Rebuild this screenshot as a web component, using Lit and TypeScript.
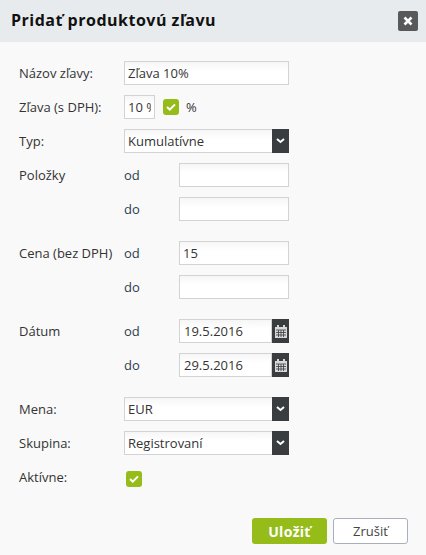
import { LitElement, html, css, svg } from "lit";
import { customElement } from "lit/decorators.js";

const chevron = svg`<svg width="9" height="6" viewBox="0 0 9 6"><path d="M1 1l3.500 3L8 1" fill="none" stroke="#fff" stroke-width="2"/></svg>`;
const check = svg`<svg width="10" height="8" viewBox="0 0 10 8"><path d="M1 4l2.800 2.600L9 1.400" fill="none" stroke="#fff" stroke-width="2"/></svg>`;
const cal = svg`<svg width="12" height="13" viewBox="0 0 12 13"><path d="M0 2h12v11H0z" fill="#d8d8d8"/><path d="M2 0h2v3H2zM8 0h2v3H8z" fill="#d8d8d8"/><path d="M1 5h10M1 7.500h10M1 10h10M3.500 5v7M6 5v7M8.500 5v7" stroke="#3a3d40" stroke-width=".8" fill="none"/></svg>`;

@customElement("app-root")
export class AppRoot extends LitElement {
  static styles = css`
    :host { display: block; width: 426px; height: 555px; background: #f9f9f9; font-family: "Open Sans", sans-serif; font-size: 13px; color: #333; overflow: hidden; }
    * { box-sizing: border-box; }
    .head { height: 42px; background: #e8ebee; display: flex; align-items: center; justify-content: space-between; padding: 0 8px 2px 11px; }
    h1 { margin: 0; font-size: 16px; font-weight: 700; color: #111; letter-spacing: .5px; }
    .close { width: 20px; height: 20px; border-radius: 2px; background: #58595b; display: flex; align-items: center; justify-content: center; margin-top: 2px; }
    form { display: flex; flex-direction: column; padding: 19px 0 0 19px; }
    .row { display: grid; grid-template-columns: 105px 55px 110px; align-items: center; height: 24px; margin-bottom: 10px; }
    .row.sp { margin-bottom: 20px; }
    .row > span.lab { line-height: 20px; }
    .sub { color: #2c3e50; }
    input, .sel { height: 24px; border: 1px solid #d3d3d3; background: linear-gradient(#f6f6f6, #fff 40%); font: inherit; font-size: 13px; color: #333; padding: 0 3px; outline: none; border-radius: 0; }
    input { width: 100%; }
    .wide { grid-column: 2 / 4; }
    .short { width: 31px; }
    .mid { grid-column: 2 / 4; display: flex; align-items: center; }
    .chk { width: 16px; height: 16px; border-radius: 3px; background: #95bc19; display: flex; align-items: center; justify-content: center; flex: none; }
    .mid .chk { margin: 0 7px 0 8px; }
    .mid .chk.act { margin: 4px 0 0 2px; }
    .sel { grid-column: 2 / 4; display: flex; align-items: center; justify-content: space-between; padding: 0 0 0 3px; }
    .arrow { width: 17px; height: 24px; margin-right: -1px; background: #3a3d40; display: flex; align-items: center; justify-content: center; }
    .date { position: relative; display: flex; }
    .date input { flex: 1; min-width: 0; padding-left: 4px; }
    .date .arrow { flex: none; margin: 0; }
    .foot { display: flex; gap: 6px; justify-content: flex-end; padding: 19px 18px 0 0; }
    button { width: 75px; height: 26px; border-radius: 3px; font: inherit; padding: 0; }
    .ok { background: #95bc19; border: 0; color: #fff; font-weight: 700; font-size: 14px; letter-spacing: .3px; }
    .no { background: #fff; border: 1px solid #aab0ba; color: #444; }
  `;

  private sub(lab: string, txt: string, val: string, sp = false) {
    return html`<div class="row ${sp ? "sp" : ""}"><span class="lab">${lab}</span><span class="sub">${txt}</span><input .value=${val} /></div>`;
  }
  private date(lab: string, txt: string, val: string, sp = false) {
    return html`<div class="row ${sp ? "sp" : ""}"><span class="lab">${lab}</span><span class="sub">${txt}</span><div class="date"><input .value=${val} /><span class="arrow">${cal}</span></div></div>`;
  }
  private sel(lab: string, val: string, sp = false) {
    return html`<div class="row ${sp ? "sp" : ""}"><span class="lab">${lab}</span><div class="sel"><span>${val}</span><span class="arrow">${chevron}</span></div></div>`;
  }

  render() {
    return html`
      <div class="head">
        <h1>Pridať produktovú zľavu</h1>
        <div class="close"><svg width="10" height="10" viewBox="0 0 10 10"><path d="M1.500 1.500l7 7M8.500 1.500l-7 7" stroke="#fff" stroke-width="2.600"/></svg></div>
      </div>
      <form>
        <div class="row"><span class="lab">Názov zľavy:</span><input class="wide" .value=${"Zľava 10%"} /></div>
        <div class="row"><span class="lab">Zľava (s DPH):</span><div class="mid"><input class="short" .value=${"10 %"} /><span class="chk">${check}</span><span>%</span></div></div>
        ${this.sel("Typ:", "Kumulatívne")}
        ${this.sub("Položky", "od", "")}
        ${this.sub("", "do", "", true)}
        ${this.sub("Cena (bez DPH)", "od", "15")}
        ${this.sub("", "do", "", true)}
        ${this.date("Dátum", "od", "19.5.2016")}
        ${this.date("", "do", "29.5.2016", true)}
        ${this.sel("Mena:", "EUR")}
        ${this.sel("Skupina:", "Registrovaní")}
        <div class="row"><span class="lab">Aktívne:</span><div class="mid"><span class="chk act">${check}</span></div></div>
        <div class="foot"><button class="ok" type="button">Uložiť</button><button class="no" type="button">Zrušiť</button></div>
      </form>
    `;
  }
}
